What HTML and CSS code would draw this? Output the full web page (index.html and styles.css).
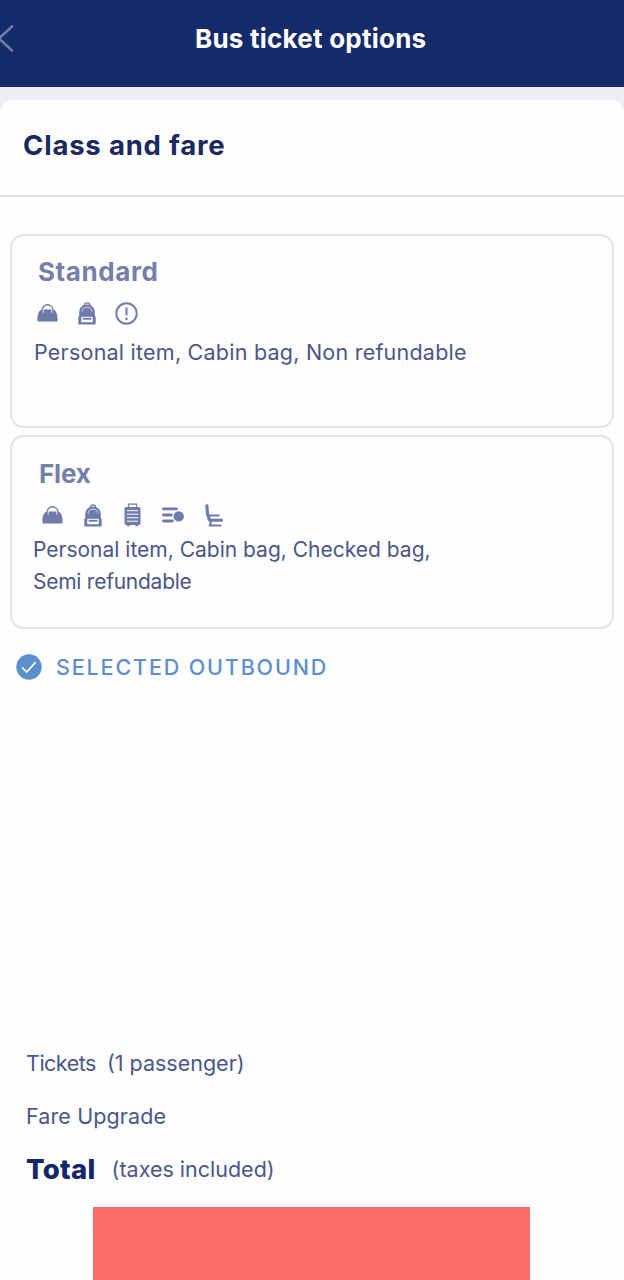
FILE: index.html
```html
<!DOCTYPE html>
<html lang="en">
<head>
<meta charset="utf-8">
<title>Bus ticket options</title>
<link rel="stylesheet" href="styles.css">
</head>
<body>
<svg class="sprite" aria-hidden="true">
  <symbol id="bag" viewBox="0 0 21 18">
    <path d="M5.300 8V5.600C5.300 2.900 7.600.8 10.500.8s5.200 2.100 5.200 4.800V8" fill="none" stroke="currentColor" stroke-width="1.400"/>
    <path d="M4.300 5.600h12.400C19.200 7 20.700 11 20.700 15.500c0 1.400-.4 2-1.400 2H1.700c-1 0-1.400-.6-1.400-2C.3 11 1.800 7 4.300 5.600z" fill="currentColor"/>
    <path d="M6.200 5.400v3M14.800 5.400v3" stroke="#fff" stroke-width=".8" stroke-linecap="round"/>
  </symbol>
  <symbol id="backpack" viewBox="0 0 18 23">
    <path d="M6.300 3.500C6.300 1.800 7.400.9 9 .9s2.700.9 2.700 2.600" fill="none" stroke="currentColor" stroke-width="1.200"/>
    <path d="M1.200 14.500V10.500c0-4.700 3.200-7.900 7.800-7.900s7.800 3.200 7.800 7.900v4z" fill="currentColor"/>
    <path d="M4 9.500C4.300 6.700 6.200 5.100 9 5.100s4.700 1.600 5 4.400" fill="none" stroke="#fff" stroke-opacity=".85" stroke-width=".8"/>
    <path d="M1.300 14h15.400l1 1.200v6.300c0 .7-.3 1-1 1H1.300c-.7 0-1-.3-1-1v-6.300z" fill="currentColor"/>
    <path d="M3.300 14.800h11.400v5.400H3.300z" fill="#fff"/>
    <path d="M4.600 15.800h8.800v1.900H4.600z" fill="currentColor"/>
  </symbol>
  <symbol id="alert" viewBox="0 0 23 23">
    <circle cx="11.500" cy="11.500" r="10.200" fill="none" stroke="currentColor" stroke-width="1.900"/>
    <path d="M11.500 5.300v8" stroke="currentColor" stroke-width="2"/>
    <circle cx="11.500" cy="16.700" r="1.250" fill="currentColor"/>
  </symbol>
  <symbol id="suitcase" viewBox="0 0 17 24">
    <path d="M4.500 4.500V1.100h8v3.400" fill="none" stroke="currentColor" stroke-width="1.200"/>
    <rect x=".5" y="4" width="16" height="18" rx="1.800" fill="currentColor"/>
    <path d="M3 21h2.600v2.300H3zM11.400 21H14v2.300h-2.600z" fill="currentColor"/>
    <path d="M2.800 7.700h11.400M2.800 11.200h11.400M2.800 14.700h11.400M2.800 18.200h11.400" stroke="#fff" stroke-width="1"/>
  </symbol>
  <symbol id="refund" viewBox="0 0 22 16">
    <path d="M1.500 1.900h13M1.500 8h7.800M1.500 14h8.800" stroke="currentColor" stroke-width="2.900" stroke-linecap="round"/>
    <circle cx="16.700" cy="9.400" r="5.200" fill="currentColor"/>
  </symbol>
  <symbol id="seat" viewBox="0 0 18 23">
    <path d="M1.900 1.900l.6 8 1.900 5.800" fill="none" stroke="currentColor" stroke-width="3.200" stroke-linecap="round" stroke-linejoin="round"/>
    <path d="M4.500 11.500h9.300" stroke="currentColor" stroke-width="1.900" stroke-linecap="round"/>
    <path d="M5 16.200h11.600" stroke="currentColor" stroke-width="2.900" stroke-linecap="round"/>
    <path d="M6.300 16.500L4.800 21.500h10.700" fill="none" stroke="currentColor" stroke-width="2.100" stroke-linecap="round" stroke-linejoin="round"/>
  </symbol>
</svg>

<header class="topbar">
  <svg class="back" viewBox="0 0 14 28"><path d="M12 1.500L-1 13.500l13 12" fill="none" stroke="currentColor" stroke-width="2.600" stroke-linecap="round"/></svg>
  <h1 class="topbar-title">Bus ticket options</h1>
</header>

<main class="page">
  <section class="sheet">
    <h2 class="section-title"><span>Class and fare</span></h2>
    <div class="fares">
      <article class="fare">
        <h3 class="fare-name standard-name">Standard</h3>
        <div class="icons standard-icons">
          <svg class="i-bag"><use href="#bag"/></svg>
          <svg class="i-backpack"><use href="#backpack"/></svg>
          <svg class="i-alert"><use href="#alert"/></svg>
        </div>
        <p class="features standard-features">Personal item, Cabin bag, Non refundable</p>
      </article>
      <article class="fare">
        <h3 class="fare-name flex-name">Flex</h3>
        <div class="icons flex-icons">
          <svg class="i-bag"><use href="#bag"/></svg>
          <svg class="i-backpack"><use href="#backpack"/></svg>
          <svg class="i-suitcase"><use href="#suitcase"/></svg>
          <svg class="i-refund"><use href="#refund"/></svg>
          <svg class="i-seat"><use href="#seat"/></svg>
        </div>
        <p class="features flex-features">Personal item, Cabin bag, Checked bag,<br><span class="semi">Semi refundable</span></p>
      </article>
    </div>
    <div class="selected">
      <svg class="check" viewBox="0 0 26 26"><circle cx="13" cy="13" r="12.700" fill="currentColor"/><path d="M6.500 13.800l4.200 4.200 8.600-9.300" fill="none" stroke="#fff" stroke-width="1.700" stroke-linecap="round" stroke-linejoin="round"/></svg>
      <span class="selected-label">SELECTED OUTBOUND</span>
    </div>
  </section>

  <section class="summary">
    <div class="row"><span class="tickets">Tickets</span><span class="passenger">(1 passenger)</span></div>
    <div class="row"><span class="upgrade">Fare Upgrade</span></div>
    <div class="row"><strong class="total">Total</strong><span class="taxes">(taxes included)</span></div>
  </section>
  <div class="cta"></div>
</main>
</body>
</html>
```
FILE: styles.css
```css
* {
  box-sizing: border-box;
}

body {
  margin: 0;
  height: 1280px;
  display: flex;
  flex-direction: column;
  overflow: hidden;
  background: #eeeff5;
  color: #4b5689;
  font-family: Inter, "Liberation Sans", sans-serif;
  font-size: 21.500px;
  white-space: nowrap;
}

h1, h2, h3, p {
  margin: 0;
}

svg {
  display: block;
  flex: none;
}

.sprite {
  position: absolute;
  width: 0;
  height: 0;
}

.topbar {
  flex: none;
  display: flex;
  align-items: center;
  height: 87px;
  padding-bottom: 10px;
  background: #152a68;
  color: #fff;
}

.back {
  width: 14px;
  height: 28px;
  color: #6f7dab;
}

.topbar-title {
  margin-left: 181px;
  font-size: 26px;
  font-weight: 700;
  letter-spacing: 0.230px;
}

.page {
  flex: 1;
  display: flex;
  flex-direction: column;
  margin-top: 13px;
  border-radius: 12px 12px 0 0;
  background: #fefefe;
}

.section-title {
  height: 97px;
  padding: 25px 0 0 23px;
  border-bottom: 2px solid #dedfe2;
  color: #1b2961;
  font-size: 27.500px;
  line-height: 40px;
  font-weight: 700;
  letter-spacing: 0.800px;
}

.fares {
  display: flex;
  flex-direction: column;
  gap: 7px;
  padding: 37px 10px 0;
}

.fare {
  height: 194px;
  border: 2px solid #e3e3e6;
  border-radius: 14px;
  padding: 20px 0 0 21px;
}

.fare-name {
  padding-left: 5px;
  color: #757fa9;
  font-size: 26px;
  line-height: 32px;
  font-weight: 700;
}

.standard-name {
  padding-bottom: 1px;
  letter-spacing: 0.600px;
}

.flex-name {
  padding: 1px 0 0 6px;
  letter-spacing: -0.200px;
}

.icons {
  display: flex;
  align-items: center;
  height: 24px;
  color: #6f7ba9;
}

.standard-icons {
  margin-top: 12px;
  padding-left: 4px;
  gap: 20px;
}

.flex-icons {
  margin-top: 13px;
  padding-left: 9px;
  gap: 21px;
}

.i-bag { width: 21px; height: 18px; }
.i-backpack { width: 18px; height: 23px; }
.i-alert { width: 23px; height: 23px; margin-left: -1px; }
.i-suitcase { width: 17px; height: 24px; margin-left: 1px; }
.i-refund { width: 22px; height: 16px; }
.i-seat { width: 18px; height: 23px; }

.features {
  line-height: 32px;
}

.standard-features {
  margin-top: 11px;
  padding-left: 1px;
  letter-spacing: 0.230px;
}

.flex-features {
  margin-top: 7px;
  font-size: 21px;
}

.semi {
  letter-spacing: -0.250px;
}

.selected {
  display: flex;
  align-items: center;
  gap: 13px;
  height: 41px;
  margin-top: 17px;
  padding-left: 16px;
  color: #5d8fce;
  font-weight: 500;
}

.check {
  width: 26px;
  height: 26px;
}

.selected-label {
  padding-left: 1px;
  letter-spacing: 1.850px;
}

.summary {
  margin-top: auto;
  padding-left: 26px;
}

.row {
  display: flex;
  align-items: center;
  height: 53px;
}

.tickets {
  letter-spacing: -0.500px;
}

.passenger {
  margin-left: 11px;
}

.upgrade {
  letter-spacing: 0.120px;
}

.total {
  color: #15276b;
  font-size: 27.500px;
  font-weight: 800;
  letter-spacing: 0.300px;
}

.taxes {
  margin-left: 16px;
}

.cta {
  width: 437px;
  height: 73px;
  margin: 12px 0 0 93px;
  background: #fa6b6a;
}
```
